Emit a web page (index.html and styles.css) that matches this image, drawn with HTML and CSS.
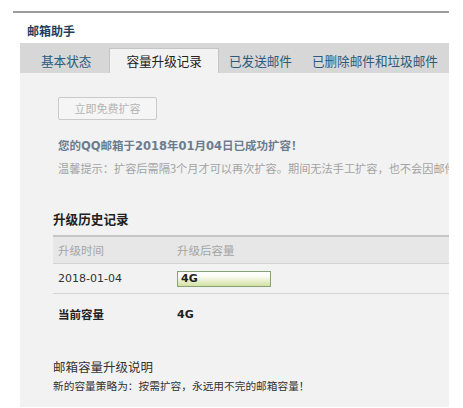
FILE: index.html
```html
<!DOCTYPE html>
<html lang="zh">
<head>
<meta charset="utf-8">
<title>邮箱助手</title>
<link rel="stylesheet" href="styles.css">
</head>
<body>
<div class="wrap">
  <div class="title">邮箱助手</div>
  <div class="panel">
    <div class="tabs">
      <div class="tab">基本状态</div>
      <div class="tab active">容量升级记录</div>
      <div class="tab">已发送邮件</div>
      <div class="tab">已删除邮件和垃圾邮件</div>
    </div>
    <div class="content">
      <div class="btn">立即免费扩容</div>
      <div class="msg">您的QQ邮箱于2018年01月04日已成功扩容！</div>
      <div class="hint">温馨提示：扩容后需隔3个月才可以再次扩容。期间无法手工扩容，也不会因邮件堆积而自动扩容。</div>
      <div class="section-title">升级历史记录</div>
      <div class="table">
        <div class="row head">
          <div class="c1">升级时间</div>
          <div class="c2">升级后容量</div>
        </div>
        <div class="row data">
          <div class="c1 num">2018-01-04</div>
          <div class="c2"><div class="bar">4G</div></div>
        </div>
      </div>
      <div class="row current">
        <div class="c1">当前容量</div>
        <div class="c2 num">4G</div>
      </div>
      <div class="desc-title">邮箱容量升级说明</div>
      <div class="desc">新的容量策略为：按需扩容，永远用不完的邮箱容量！</div>
    </div>
  </div>
</div>
</body>
</html>
```

FILE: styles.css
```css
html, body {
  margin: 0;
  padding: 0;
  background: #ffffff;
  font-family: "DejaVu Sans", "Noto Sans CJK SC", sans-serif;
  color: #333;
}

.wrap {
  margin: 11px 14px 0 13px;
  border-top: 2px solid #9c9c9c;
}

.title {
  height: 24px;
  line-height: 24px;
  padding-top: 6px;
  padding-left: 14px;
  font-family: "Noto Sans CJK SC", sans-serif;
  font-size: 12px;
  font-weight: bold;
  color: #1e3e5e;
}

.panel {
  margin-left: 7px;
}

.tabs {
  height: 25px;
  padding: 5px 0 0 11px;
  background: #d7d7d7;
  display: flex;
  align-items: flex-end;
}

.tab {
  height: 25px;
  line-height: 25px;
  padding: 0 10px;
  font-family: "Noto Sans CJK SC", sans-serif;
  font-size: 12.6px;
  color: #2b5a7a;
  white-space: nowrap;
  box-sizing: border-box;
}

.tab.active {
  background: #f2f2f2;
  border: 1px solid #c6c6c6;
  border-bottom: none;
  color: #222;
  padding: 0 16px;
  margin-left: 8px;
  line-height: 24px;
}

.content {
  background: #f2f2f2;
  padding: 24px 0 14px 33px;
  overflow: hidden;
}

.btn {
  margin-left: 5px;
  width: 97px;
  height: 21px;
  line-height: 21px;
  border: 1px solid #cacaca;
  border-radius: 2px;
  background: #f5f5f5;
  color: #b4b4b4;
  font-family: "Noto Sans CJK SC", sans-serif;
  font-size: 11px;
  text-align: center;
}

.msg {
  margin: 17px 0 0 5px;
  line-height: 18px;
  font-size: 11.5px;
  font-weight: bold;
  color: #6b7d8e;
  white-space: nowrap;
}

.hint {
  margin: 4px 0 0 5px;
  line-height: 18px;
  font-size: 11.2px;
  color: #a3a3a3;
  white-space: nowrap;
  overflow: hidden;
  font-family: "Noto Sans CJK SC", sans-serif;
}

.section-title {
  margin-top: 33px;
  line-height: 18px;
  font-family: "Noto Sans CJK SC", sans-serif;
  font-size: 12.6px;
  font-weight: bold;
  color: #222;
}

.table {
  margin-top: 7px;
  border-top: 2px solid #c6c6c6;
}

.row {
  display: flex;
  align-items: center;
}

.c1 {
  width: 119px;
  padding-left: 5px;
}

.head {
  height: 26px;
  background: #e7e7e7;
  border-bottom: 1px solid #d4d4d4;
  font-family: "Noto Sans CJK SC", sans-serif;
  font-size: 11.5px;
  color: #a5a5a5;
}

.data {
  height: 29px;
  border-bottom: 1px solid #d4d4d4;
  font-size: 11px;
  color: #333;
}

.num {
  font-family: "DejaVu Sans", sans-serif;
}

.bar {
  width: 89px;
  height: 14px;
  line-height: 14px;
  padding-left: 3px;
  border: 1px solid #86a276;
  background: linear-gradient(#ffffff, #fbfdf4 30%, #d3e0a2);
  font-size: 11px;
  font-weight: bold;
  color: #222;
}

.current {
  margin-top: 11px;
  height: 18px;
  font-weight: bold;
  font-size: 11px;
  color: #222;
}

.current .c1 {
  font-family: "Noto Sans CJK SC", sans-serif;
  font-size: 11.5px;
}

.desc-title {
  margin-top: 36px;
  line-height: 16px;
  font-family: "Noto Sans CJK SC", sans-serif;
  font-size: 12.5px;
  color: #333;
}

.desc {
  margin-top: 4px;
  line-height: 14px;
  font-family: "Noto Sans CJK SC", sans-serif;
  font-size: 10.7px;
  color: #333;
}
```
